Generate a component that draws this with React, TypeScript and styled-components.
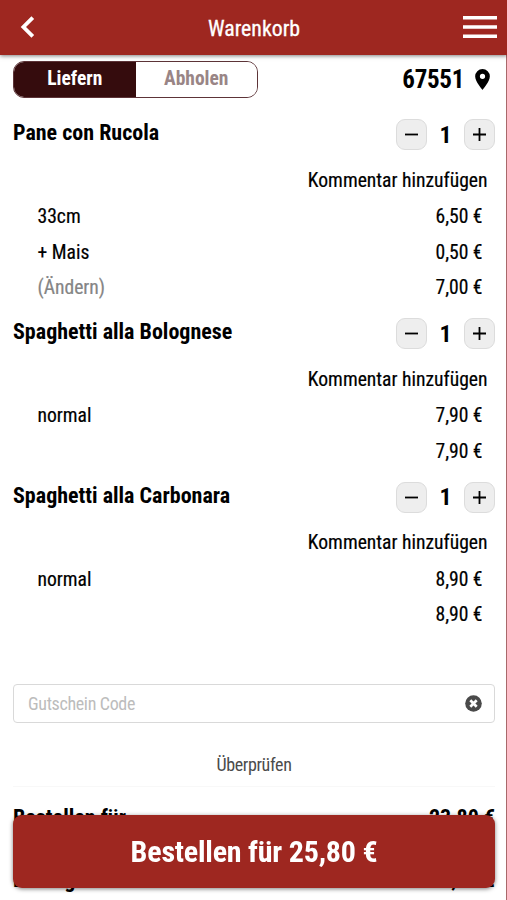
import React from 'react';
import styled, { createGlobalStyle } from 'styled-components';

const brand = '#9e2720';
const dark = '#350c0d';

const GlobalStyle = createGlobalStyle`
  *, *::before, *::after { box-sizing: border-box; }
  html, body { margin: 0; background: #fff; overflow: hidden; }
  body { font-family: "Roboto Condensed", Roboto, sans-serif; color: #000; }
  button, input { font-family: inherit; margin: 0; padding: 0; }
`;

const Page = styled.div`
  height: 900px;
  display: flex;
  flex-direction: column;
  overflow: hidden;
`;

const Header = styled.header`
  flex: none;
  height: 54.5px;
  padding: 0 10px 0 20px;
  display: grid;
  grid-template-columns: 34px 1fr 34px;
  align-items: center;
  background: ${brand};
  color: #fff;
  box-shadow: 0 1px 4px rgba(0, 0, 0, 0.5);
  z-index: 1;
`;

const Title = styled.h1`
  margin: 3px 0 0;
  padding-right: 9px;
  font-size: 21.8px;
  line-height: 26px;
  font-weight: 400;
  text-align: center;
  -webkit-text-stroke: 0.3px currentColor;
`;

const Icon = styled.svg`
  display: block;
  flex: none;
`;

const Body = styled.main`
  flex: 1;
  min-height: 0;
  padding: 6.5px 11px 0 13px;
  border-right: 1px solid #a8696a;
`;

const Bar = styled.div`
  height: 36.5px;
  display: flex;
  justify-content: space-between;
  align-items: center;
`;

const Toggle = styled.div`
  width: 245px;
  height: 36.5px;
  display: flex;
  border: 1px solid #5d3438;
  border-radius: 11px;
  overflow: hidden;
`;

const ToggleOption = styled.button<{ $active?: boolean }>`
  flex: 1;
  padding-bottom: 1px;
  border: 0;
  background: ${p => (p.$active ? dark : '#fff')};
  color: ${p => (p.$active ? '#fff' : '#998586')};
  font-size: 19.5px;
  font-weight: 700;
`;

const Location = styled.div`
  display: flex;
  align-items: center;
  gap: 11px;
  padding-right: 5px;
  font-size: 25px;
  line-height: 30px;
  font-weight: 700;
  letter-spacing: -0.3px;
`;

const PostCode = styled.span`
  padding-top: 2px;
`;

const Items = styled.section`
  padding-top: 21.5px;
`;

const Item = styled.article`
  padding-bottom: 13.3px;
`;

const ItemHead = styled.div`
  height: 31px;
  display: flex;
  justify-content: space-between;
`;

const ItemName = styled.h2`
  margin: 1px 0 0;
  font-size: 22px;
  line-height: 25px;
  font-weight: 700;
`;

const Stepper = styled.div`
  display: grid;
  grid-template-columns: 31px 37px 31px;
  align-items: center;
`;

const StepButton = styled.button`
  width: 31px;
  height: 31px;
  display: grid;
  place-items: center;
  background: #eee;
  border: 1px solid #dcdcdc;
  border-radius: 9px;
  color: #000;
`;

const Quantity = styled.span`
  font-size: 24px;
  line-height: 30px;
  font-weight: 700;
  text-align: center;
`;

const Comment = styled.div`
  height: 48px;
  padding: 18.5px 7.5px 0 0;
  font-size: 19.6px;
  line-height: 24px;
  text-align: right;
  -webkit-text-stroke: 0.2px currentColor;
`;

const Line = styled.div`
  height: 35.6px;
  padding: 7.2px 12.5px 0 24.5px;
  display: flex;
  justify-content: space-between;
  font-size: 19.6px;
  line-height: 24px;
  -webkit-text-stroke: 0.2px currentColor;
`;

const LineLabel = styled.span<{ $muted?: boolean }>`
  color: ${p => (p.$muted ? '#858585' : 'inherit')};
`;

const Voucher = styled.div`
  margin-top: 38.5px;
  height: 39px;
  display: flex;
  align-items: center;
  padding: 0 12px 0 14px;
  border: 1px solid #d9d9d9;
  border-radius: 4px;
`;

const VoucherInput = styled.input`
  flex: 1;
  height: 30px;
  border: 0;
  outline: 0;
  background: transparent;
  font-size: 18px;
  letter-spacing: -0.35px;
  &::placeholder { color: #bcbcbc; opacity: 1; }
`;

const Check = styled.button`
  display: block;
  width: 100%;
  height: 64px;
  padding-top: 21px;
  border: 0;
  border-bottom: 1px solid #f8f8f8;
  background: none;
  color: #4b4b4b;
  font-size: 18px;
  letter-spacing: -0.35px;
  line-height: 22px;
`;

const Totals = styled.div`
  padding-top: 18px;
  display: grid;
  gap: 37px;
`;

const Total = styled.div`
  display: flex;
  justify-content: space-between;
  font-size: 22px;
  line-height: 25px;
  font-weight: 700;
`;

const OrderButton = styled.button`
  position: fixed;
  left: 13px;
  right: 12px;
  bottom: 12px;
  height: 73.5px;
  border: 0;
  border-radius: 9px;
  background: ${brand};
  color: #fff;
  font-size: 30px;
  letter-spacing: -0.2px;
  font-weight: 700;
  box-shadow: 0 1px 4px rgba(0, 0, 0, 0.5);
`;

type Dish = { name: string; lines: { label: string; price: string; muted?: boolean }[] };

const dishes: Dish[] = [
  {
    name: 'Pane con Rucola',
    lines: [
      { label: '33cm', price: '6,50 €' },
      { label: '+ Mais', price: '0,50 €' },
      { label: '(Ändern)', price: '7,00 €', muted: true },
    ],
  },
  {
    name: 'Spaghetti alla Bolognese',
    lines: [{ label: 'normal', price: '7,90 €' }, { label: '', price: '7,90 €' }],
  },
  {
    name: 'Spaghetti alla Carbonara',
    lines: [{ label: 'normal', price: '8,90 €' }, { label: '', price: '8,90 €' }],
  },
];

const DishRow = ({ dish }: { dish: Dish }) => (
  <Item>
    <ItemHead>
      <ItemName>{dish.name}</ItemName>
      <Stepper>
        <StepButton aria-label="Weniger">
          <Icon width="15" height="15" viewBox="0 0 15 15" stroke="currentColor" strokeWidth="1.8">
            <path d="M1 7.5h13" />
          </Icon>
        </StepButton>
        <Quantity>1</Quantity>
        <StepButton aria-label="Mehr">
          <Icon width="15" height="15" viewBox="0 0 15 15" stroke="currentColor" strokeWidth="1.8">
            <path d="M1 7.5h13M7.5 1v13" />
          </Icon>
        </StepButton>
      </Stepper>
    </ItemHead>
    <Comment>Kommentar hinzufügen</Comment>
    {dish.lines.map((line, i) => (
      <Line key={i}>
        <LineLabel $muted={line.muted}>{line.label}</LineLabel>
        <span>{line.price}</span>
      </Line>
    ))}
  </Item>
);

export default function App() {
  return (
    <Page>
      <GlobalStyle />
      <Header>
        <Icon width="16" height="24" viewBox="0 0 16 24" fill="none" stroke="#fff" strokeWidth="3.8">
          <path d="M12.8 2.6 3.4 12l9.4 9.4" />
        </Icon>
        <Title>Warenkorb</Title>
        <Icon width="34" height="24" viewBox="0 0 34 24" fill="#fff">
          <path d="M0 1h34v3.6H0zM0 10.2h34v3.6H0zM0 19.4h34V23H0z" />
        </Icon>
      </Header>
      <Body>
        <Bar>
          <Toggle>
            <ToggleOption $active>Liefern</ToggleOption>
            <ToggleOption>Abholen</ToggleOption>
          </Toggle>
          <Location>
            <PostCode>67551</PostCode>
            <Icon width="15" height="21" viewBox="0 0 14 20" fill="#000">
              <path d="M7 0a7 7 0 0 0-7 7c0 5.2 7 13 7 13s7-7.8 7-13a7 7 0 0 0-7-7zm0 9.5a2.5 2.5 0 1 1 0-5 2.5 2.5 0 0 1 0 5z" />
            </Icon>
          </Location>
        </Bar>
        <Items>
          {dishes.map(dish => (
            <DishRow key={dish.name} dish={dish} />
          ))}
        </Items>
        <Voucher>
          <VoucherInput placeholder="Gutschein Code" />
          <Icon width="17" height="17" viewBox="0 0 17 17">
            <circle cx="8.5" cy="8.5" r="8.3" fill="#4a4a4a" />
            <path d="m5.3 5.3 6.4 6.4m0-6.4-6.4 6.4" stroke="#fff" strokeWidth="2.7" />
          </Icon>
        </Voucher>
        <Check>Überprüfen</Check>
        <Totals>
          <Total>
            <span>Bestellen für</span>
            <span>23,80 €</span>
          </Total>
          <Total>
            <span>Liefergebühr</span>
            <span>2,00 €</span>
          </Total>
        </Totals>
      </Body>
      <OrderButton>Bestellen für 25,80 €</OrderButton>
    </Page>
  );
}
